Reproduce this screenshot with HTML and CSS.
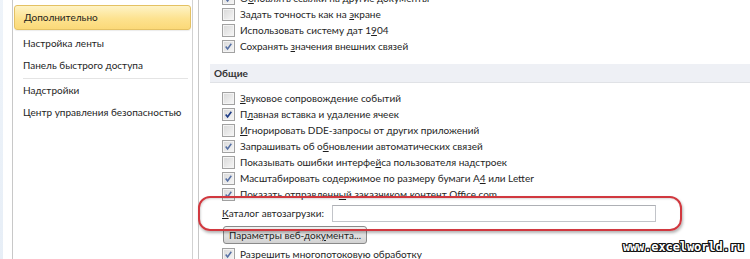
FILE: index.html
```html
<!DOCTYPE html>
<html lang="ru">
<head>
    <meta charset="UTF-8">
    <title>Параметры Excel</title>
    <link rel="stylesheet" href="styles.css">
</head>
<body>

    <div class="window">
        <div class="edge"></div>

        <nav class="sidebar">
            <div class="nav-item selected">Дополнительно</div>
            <div class="nav-item">Настройка ленты</div>
            <div class="nav-item">Панель быстрого доступа</div>
            <div class="nav-sep"></div>
            <div class="nav-item">Надстройки</div>
            <div class="nav-item">Центр управления безопасностью</div>
        </nav>

        <main class="content">
            <div class="group first">
                <div class="row"><span class="box checked"><svg viewBox="0 0 13 13"><path d="M3.2 6.6 L5.4 9.4 L9.8 3.2"/></svg></span><span>О<u>б</u>новлять ссылки на другие документы</span></div>
                <div class="row"><span class="box"></span><span>Задать точность как на <u>э</u>кране</span></div>
                <div class="row"><span class="box"></span><span>Использовать систему дат 1<u>9</u>04</span></div>
                <div class="row"><span class="box checked"><svg viewBox="0 0 13 13"><path d="M3.2 6.6 L5.4 9.4 L9.8 3.2"/></svg></span><span>Сохранять <u>з</u>начения внешних связей</span></div>
            </div>

            <div class="section-title">Общие</div>

            <div class="group">
                <div class="row"><span class="box"></span><span><u>З</u>вуковое сопровождение событий</span></div>
                <div class="row"><span class="box checked dark"><svg viewBox="0 0 13 13"><path d="M3.2 6.6 L5.4 9.4 L9.8 3.2"/></svg></span><span>П<u>л</u>авная вставка и удаление ячеек</span></div>
                <div class="row"><span class="box"></span><span><u>И</u>гнорировать DDE-запросы от других приложений</span></div>
                <div class="row"><span class="box checked"><svg viewBox="0 0 13 13"><path d="M3.2 6.6 L5.4 9.4 L9.8 3.2"/></svg></span><span>Запрашивать об о<u>б</u>новлении автоматических связей</span></div>
                <div class="row"><span class="box"></span><span>Показывать ошибки интерфе<u>й</u>са пользователя надстроек</span></div>
                <div class="row"><span class="box checked"><svg viewBox="0 0 13 13"><path d="M3.2 6.6 L5.4 9.4 L9.8 3.2"/></svg></span><span>Масштабировать содержимое по размеру бумаги А<u>4</u> или Letter</span></div>
                <div class="row"><span class="box checked"><svg viewBox="0 0 13 13"><path d="M3.2 6.6 L5.4 9.4 L9.8 3.2"/></svg></span><span>Показать отправленн<u>ы</u>й заказчиком контент Office.com</span></div>
            </div>

            <div class="field">
                <label><u>К</u>аталог автозагрузки:</label>
                <div class="input"></div>
            </div>

            <div class="btn">Параметры веб-док<u>у</u>мента...</div>

            <div class="row last"><span class="box checked"><svg viewBox="0 0 13 13"><path d="M3.2 6.6 L5.4 9.4 L9.8 3.2"/></svg></span><span><u>Р</u>азрешить многопотоковую обработку</span></div>
        </main>

        <!-- красная рамка поверх -->
        <div class="highlight"></div>
        <div class="watermark">www.excelworld.ru</div>
    </div>

</body>
</html>
```

FILE: styles.css
```css
body {
    margin: 0;
    padding: 0;
    background-color: #ffffff;
    font-family: Lato, "Liberation Sans", sans-serif;
    font-size: 10px;
    color: #1e1e1e;
}
.window {
    position: relative;
    width: 750px;
    height: 259px;
    overflow: hidden;
    display: flex;
}
.edge {
    width: 3px;
    margin-right: 9px;
    background: linear-gradient(#e3ecf6, #d7e3f1);
    opacity: 0.6;
}
u {
    text-decoration: underline;
    text-underline-offset: 1px;
}

/* Левое меню */
.sidebar {
    width: 179px;
    border-left: 1px solid #c8c8c8;
    border-right: 1px solid #d2d2d2;
    padding-top: 5px;
    flex-shrink: 0;
}
.nav-item {
    height: 22px;
    line-height: 22px;
    padding-left: 10px;
    white-space: nowrap;
}
.nav-item.selected {
    height: 23px;
    line-height: 23px;
    margin: 0 1px 2px 1px;
    padding-left: 9px;
    border: 1px solid #e4c163;
    border-radius: 3px;
    background: linear-gradient(#fef3c6, #fde28f 55%, #fbd978);
    box-shadow: 0 1px 1px rgba(0, 0, 0, 0.08);
}
.nav-sep {
    height: 1px;
    margin: 2px 4px 0 10px;
    background-color: #e4e4e4;
}

/* Правая часть */
.content {
    margin-left: 5px;
    border-left: 1px solid #c8c8c8;
    flex: 1;
}
.group.first {
    margin-top: -10px;
}
.row {
    display: flex;
    align-items: center;
    height: 16px;
    padding-left: 23px;
    gap: 5px;
    white-space: nowrap;
}
.box {
    width: 11px;
    height: 11px;
    border: 1px solid #a2a2a2;
    background: linear-gradient(135deg, #d8d8d8, #f7f7f7);
    box-shadow: inset 0 0 0 1px #f4f4f4;
    flex-shrink: 0;
    display: flex;
}
.box svg {
    width: 11px;
    height: 11px;
}
.box svg path {
    fill: none;
    stroke: #5670a4;
    stroke-width: 1.8;
}
.box.dark svg path {
    stroke: #1e3c86;
    stroke-width: 2;
}
.section-title {
    margin: 10px 0 7px 11px;
    height: 18px;
    line-height: 18px;
    padding-left: 4px;
    background-color: #eef0f5;
    border-bottom: 1px solid #e0e2e6;
    font-weight: bold;
    color: #333333;
}
.field {
    display: flex;
    align-items: center;
    margin-top: 2px;
    padding-left: 23px;
    height: 18px;
    white-space: nowrap;
}
.field label {
    width: 110px;
    flex-shrink: 0;
}
.input {
    width: 322px;
    height: 15px;
    border: 1px solid #c2c4c9;
    border-top-color: #aeb0b5;
    background-color: #ffffff;
}
.btn {
    margin: 4px 0 2px 24px;
    width: 142px;
    height: 16px;
    line-height: 16px;
    text-align: center;
    border: 1px solid #8a8a8a;
    border-radius: 3px;
    background: linear-gradient(#f2f2f2, #e3e3e3 50%, #d2d2d2);
    white-space: nowrap;
}

/* Выделение */
.highlight {
    position: absolute;
    left: 198px;
    top: 196px;
    width: 480px;
    height: 31px;
    border: 2px solid #d1383f;
    border-radius: 12px;
    box-shadow: 1px 2px 3px rgba(0, 0, 0, 0.3), inset 1px 1px 2px rgba(0, 0, 0, 0.15);
}
.watermark {
    position: absolute;
    right: 6px;
    bottom: 5px;
    font-family: "DejaVu Sans Mono", monospace;
    font-weight: bold;
    font-size: 12px;
    letter-spacing: -0.1px;
    color: #ffffff;
    text-shadow: 1px 0 0 #111, -1px 0 0 #111, 0 1px 0 #111, 0 -1px 0 #111,
        1px 1px 0 #111, -1px -1px 0 #111, 1px -1px 0 #111, -1px 1px 0 #111;
}
```
